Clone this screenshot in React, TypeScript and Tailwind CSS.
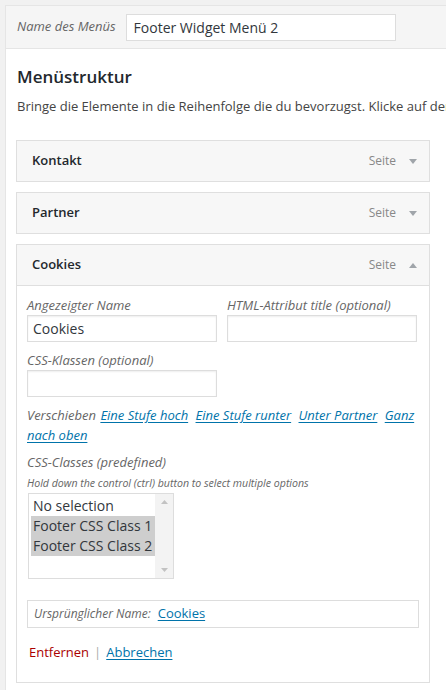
import React from 'react';

const font = { fontFamily: '"Open Sans", "Liberation Sans", sans-serif' };

const Arrow = ({ up }: { up?: boolean }) => (
  <svg width="8" height="5" viewBox="0 0 8 5" className="ml-[13px]">
    {up ? <path d="M0 5 L4 0 L8 5 Z" fill="#a0a5aa" /> : <path d="M0 0 L8 0 L4 5 Z" fill="#a0a5aa" />}
  </svg>
);

const ItemHandle = ({ title, up }: { title: string; up?: boolean }) => (
  <div className="flex h-[40px] items-center justify-between bg-[#f7f7f7] pl-[15px] pr-[12px]">
    <span className="text-[13px] font-semibold text-[#23282d]">{title}</span>
    <span className="flex items-center text-[12px] text-[#888]">
      Seite
      <Arrow up={up} />
    </span>
  </div>
);

const Field = ({ label, value }: { label: string; value?: string }) => (
  <label className="flex w-[190px] flex-col">
    <span className="text-[13px] italic leading-[20px] text-[#666]">{label}</span>
    <div className="flex h-[27px] items-center border border-[#ddd] bg-white px-[5px] text-[14px] text-[#32373c] shadow-[inset_0_1px_2px_rgba(0,0,0,0.07)]">
      {value}
    </div>
  </label>
);

const Link = ({ children }: { children: React.ReactNode }) => (
  <a className="text-[#0073aa] underline underline-offset-2">{children}</a>
);

export default function App() {
  return (
    <div style={font} className="h-[690px] w-[446px] overflow-hidden bg-[#f1f1f1] pl-[5px] pt-[5px]">
      <div className="w-[600px] border border-[#e5e5e5] bg-white">
        <div className="flex h-[43px] items-center border-b border-[#e5e5e5] bg-[#f5f5f5] pl-[11px]">
          <span className="text-[13px] italic text-[#666]">Name des Menüs</span>
          <div className="ml-[10px] flex h-[27px] w-[270px] items-center border border-[#ddd] bg-white px-[7px] text-[14px] text-[#32373c]">
            Footer Widget Menü 2
          </div>
        </div>

        <div className="pl-[10px] pt-[15px]">
          <h3 className="pl-[1px] text-[17px] font-semibold text-[#23282d]">Menüstruktur</h3>
          <p className="mt-[7px] pl-[1px] text-[13px] whitespace-nowrap text-[#444]">
            Bringe die Elemente in die Reihenfolge die du bevorzugst. Klicke auf den Pfeil rechts
          </p>

          <div className="mt-[24px] flex w-[414px] flex-col gap-[10px]">
            <div className="border border-[#dfdfdf]">
              <ItemHandle title="Kontakt" />
            </div>
            <div className="border border-[#dfdfdf]">
              <ItemHandle title="Partner" />
            </div>
            <div className="border border-[#dfdfdf]">
              <div className="border-b border-[#dfdfdf]">
                <ItemHandle title="Cookies" up />
              </div>
              <div className="px-[10px] pt-[9px] pb-[19px] text-[13px]">
                <div className="flex gap-[10px]">
                  <Field label="Angezeigter Name" value="Cookies" />
                  <Field label="HTML-Attribut title (optional)" />
                </div>
                <div className="mt-[8px]">
                  <Field label="CSS-Klassen (optional)" />
                </div>
                <p className="mt-[8px] text-[13px] italic leading-[20px] text-[#666]">
                  Verschieben{' '}
                  <span className="ml-[1px]"><Link>Eine Stufe hoch</Link></span>{' '}
                  <span className="ml-[4px]"><Link>Eine Stufe runter</Link></span>{' '}
                  <span className="ml-[4px]"><Link>Unter Partner</Link></span>{' '}
                  <span className="ml-[4px]"><Link>Ganz nach oben</Link></span>
                </p>
                <p className="mt-[7px] text-[13px] italic leading-[20px] text-[#666]">CSS-Classes (predefined)</p>
                <p className="mt-[3px] text-[10.6px] italic leading-[16px] whitespace-nowrap text-[#666]">
                  Hold down the control (ctrl) button to select multiple options
                </p>
                <div className="mt-[2px] ml-[1px] flex h-[86px] w-[146px] border border-[#ddd] bg-white">
                  <div className="flex-1 overflow-hidden pt-[2px] pl-[2px] text-[14px] leading-[20px] whitespace-nowrap text-[#32373c]">
                    <div className="px-[2px]">No selection</div>
                    <div className="bg-[#cecece] px-[2px]">Footer CSS Class 1</div>
                    <div className="bg-[#cecece] px-[2px]">Footer CSS Class 2</div>
                  </div>
                  <div className="flex w-[18px] flex-col items-center justify-between bg-[#f3f3f3] py-[6px]">
                    <svg width="7" height="4" viewBox="0 0 7 4"><path d="M0 4 L3.5 0 L7 4 Z" fill="#c2c2c2" /></svg>
                    <svg width="7" height="4" viewBox="0 0 7 4"><path d="M0 0 L7 0 L3.5 4 Z" fill="#c2c2c2" /></svg>
                  </div>
                </div>
                <div className="mt-[21px] flex h-[28px] items-center border border-[#ddd] px-[6px] text-[12px] italic text-[#666]">
                  Ursprünglicher Name:
                  <span className="ml-[7px] text-[13px] not-italic"><Link>Cookies</Link></span>
                </div>
                <div className="mt-[15px] flex items-center pl-[2px] text-[13px]">
                  <span className="text-[#a00]">Entfernen</span>
                  <span className="mx-[5px] text-[#aaa]">|</span>
                  <Link>Abbrechen</Link>
                </div>
              </div>
            </div>
            <div className="h-[40px] border border-[#dfdfdf] bg-[#f7f7f7]" />
          </div>
        </div>
      </div>
    </div>
  );
}
